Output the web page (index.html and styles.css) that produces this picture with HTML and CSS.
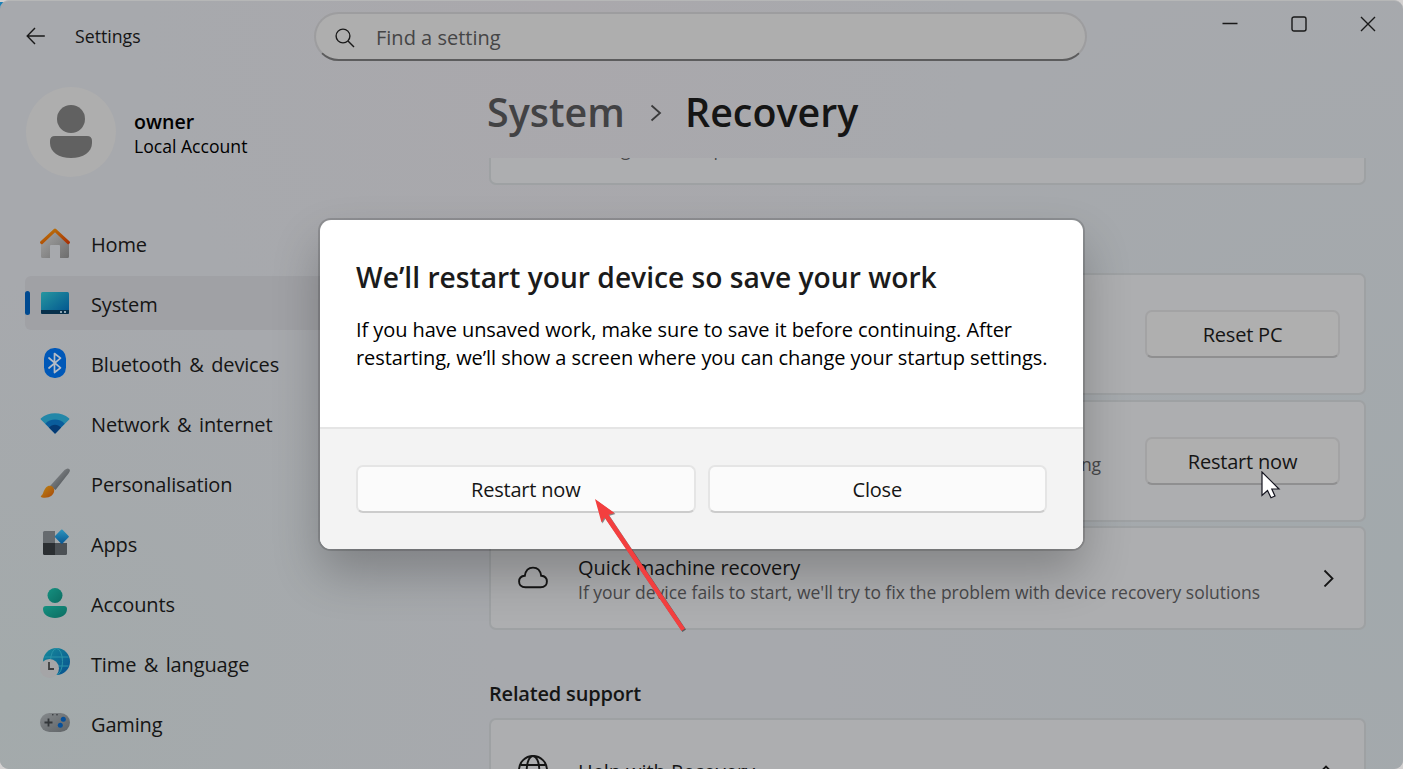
FILE: index.html
```html
<!DOCTYPE html>
<html lang="en">
<head>
<meta charset="UTF-8" />
<meta name="viewport" content="width=device-width, initial-scale=1" />
<title>Settings - Recovery</title>
<link rel="stylesheet" href="styles.css">
</head>
<body>
<div class="window">
  <header class="titlebar">
    <svg class="back" width="20" height="18" viewBox="0 0 20 18"><path d="M18.800 9H1.200M9 1L1.200 9L9 17" /></svg>
    <span class="app-name">Settings</span>
    <div class="search">
      <svg width="20" height="20" viewBox="0 0 20 20"><circle cx="8" cy="8" r="6.900" /><path d="M13 13L19 19" /></svg>
      <span class="search-text">Find a setting</span>
    </div>
    <div class="controls">
      <svg width="16" height="16" viewBox="0 0 16 16"><path d="M.5 7.500H15.500" /></svg>
      <svg width="16" height="16" viewBox="0 0 16 16"><rect x="1" y="1" width="14" height="14" rx="2" /></svg>
      <svg width="16" height="16" viewBox="0 0 16 16"><path d="M1 1L15 15M15 1L1 15" /></svg>
    </div>
  </header>

  <div class="content">
    <aside class="sidebar">
      <div class="profile">
        <div class="avatar">
          <svg width="42" height="54" viewBox="0 0 42 54"><circle cx="21" cy="14" r="14" /><path d="M5 31H37Q42 31 42 36V38C42 47 33 53 21 53S0 47 0 38V36Q0 31 5 31Z" /></svg>
        </div>
        <div class="who">
          <div class="user-name">owner</div>
          <div class="user-type">Local Account</div>
        </div>
      </div>

      <nav class="nav">
        <a class="nav-item">
          <svg width="30" height="30" viewBox="0 0 30 30">
            <defs>
              <linearGradient id="wall" x1="0" y1="0" x2="1" y2="1"><stop offset="0" stop-color="#a8a8a8" /><stop offset="1" stop-color="#6d6d6d" /></linearGradient>
              <linearGradient id="roof" x1="0" y1="0" x2="1" y2="1"><stop offset="0" stop-color="#bd7a08" /><stop offset="1" stop-color="#a83205" /></linearGradient>
            </defs>
            <path fill="url(#wall)" d="M1 14L15 2L29 14V28.500Q29 30 27.500 30H20V18Q20 17 19 17H11Q10 17 10 18V30H2.500Q1 30 1 28.500Z" />
            <path fill="none" stroke="url(#roof)" stroke-width="3.200" stroke-linecap="round" stroke-linejoin="round" d="M1.700 14.500L15 2.200L28.300 14.500" />
          </svg>
          <span class="nav-label">Home</span>
        </a>
        <a class="nav-item selected">
          <svg width="30" height="30" viewBox="0 0 30 30">
            <defs><linearGradient id="screen" x1="0" y1="0" x2="1" y2="1"><stop offset="0" stop-color="#2697a0" /><stop offset="1" stop-color="#00528f" /></linearGradient></defs>
            <rect x="1" y="4" width="28" height="22" rx="1.500" fill="url(#screen)" />
            <path fill="#07304b" d="M1 22H29V24.500Q29 26 27.500 26H2.500Q1 26 1 24.500Z" />
            <path fill="#8ea5b3" d="M20 23H22V25H20ZM24 23H26V25H24Z" />
          </svg>
          <span class="nav-label">System</span>
        </a>
        <a class="nav-item">
          <svg width="30" height="30" viewBox="0 0 30 30">
            <rect x="4" y="0" width="22" height="30" rx="10.500" fill="#0058b8" />
            <path fill="none" stroke="#b5bcc6" stroke-width="1.700" stroke-linejoin="round" stroke-linecap="round" d="M9 10L20.500 19.800L14.500 24.500V5.500L20.500 10.200L9 20" />
          </svg>
          <span class="nav-label">Bluetooth &amp; devices</span>
        </a>
        <a class="nav-item">
          <svg width="30" height="30" viewBox="0 0 30 30">
            <path fill="#2387a8" d="M15 25.500L.8 11.500Q.3 10.800 1 10.200C8.500 3.500 21.500 3.500 29 10.200Q29.700 10.800 29.200 11.500Z" />
            <path fill="#0a5d9c" d="M15 25.500L5.300 15.700C10.500 10.200 19.500 10.200 24.700 15.700Z" />
            <path fill="#043a74" d="M15 25.800L8.900 19.600C12.300 15.700 17.700 15.700 21.100 19.600L16 25Q15 26 14 25Z" />
          </svg>
          <span class="nav-label">Network &amp; internet</span>
        </a>
        <a class="nav-item">
          <svg width="30" height="30" viewBox="0 0 30 30">
            <defs>
              <linearGradient id="handle" x1="0" y1="0" x2="1" y2="1"><stop offset="0.200" stop-color="#85888b" /><stop offset="1" stop-color="#3d4246" /></linearGradient>
              <linearGradient id="bristle" x1="0" y1="0" x2="1" y2="1"><stop offset="0" stop-color="#bd8614" /><stop offset="1" stop-color="#a6480b" /></linearGradient>
            </defs>
            <path fill="url(#handle)" d="M10 18L24.500 2Q27.500 -.6 29.200 1T28.500 5.500L15.500 22Z" />
            <path fill="url(#bristle)" d="M6 19.500C8.500 16.500 13 17.500 14 21C15.300 26.500 9.500 31 2 29.500Q.3 29 1 28C3.500 26.500 3.200 22.500 6 19.500Z" />
          </svg>
          <span class="nav-label">Personalisation</span>
        </a>
        <a class="nav-item">
          <svg width="30" height="30" viewBox="0 0 30 30">
            <defs><linearGradient id="tile" x1="0" y1="0" x2="1" y2="1"><stop offset="0" stop-color="#2e96be" /><stop offset="1" stop-color="#075692" /></linearGradient></defs>
            <path fill="#666b6f" d="M4.500 3H15V15H3V4.500Q3 3 4.500 3Z" />
            <path fill="#2b2f32" d="M3 15H15V27H4.500Q3 27 3 25.500Z" />
            <path fill="#4c5155" d="M15 15H27V25.500Q27 27 25.500 27H15Z" />
            <rect x="16.500" y="3.300" width="10.600" height="10.600" rx="1" transform="rotate(45 21.800 8.600)" fill="url(#tile)" />
          </svg>
          <span class="nav-label">Apps</span>
        </a>
        <a class="nav-item">
          <svg width="30" height="30" viewBox="0 0 30 30">
            <defs><linearGradient id="person" x1="0" y1="0" x2="1" y2="1"><stop offset="0" stop-color="#159181" /><stop offset="1" stop-color="#0c6c61" /></linearGradient></defs>
            <circle cx="15" cy="7.500" r="7.500" fill="url(#person)" />
            <path fill="url(#person)" d="M6 18H24Q27 18 27 21C27 26.500 22 30 15 30S3 26.500 3 21Q3 18 6 18Z" />
          </svg>
          <span class="nav-label">Accounts</span>
        </a>
        <a class="nav-item">
          <svg width="30" height="30" viewBox="0 0 30 30">
            <defs><linearGradient id="globe" x1="0" y1="0" x2="1" y2="1"><stop offset="0" stop-color="#178b9b" /><stop offset="1" stop-color="#064f8e" /></linearGradient></defs>
            <circle cx="16.500" cy="13.500" r="13.500" fill="url(#globe)" />
            <g fill="none" stroke="#2b93a8" stroke-width="1"><ellipse cx="16.500" cy="13.500" rx="6" ry="13" /><path d="M4.500 9H28.500M4.500 18H28.500" /></g>
            <circle cx="9.500" cy="20.500" r="9.500" fill="#a5a5a7" />
            <path fill="none" stroke="#3d3d3f" stroke-width="1.800" d="M9 14V21H14" />
          </svg>
          <span class="nav-label">Time &amp; language</span>
        </a>
        <a class="nav-item">
          <svg width="30" height="30" viewBox="0 0 30 30">
            <defs><linearGradient id="pad" x1="0" y1="0" x2="1" y2="1"><stop offset="0" stop-color="#85898c" /><stop offset="1" stop-color="#5f6366" /></linearGradient></defs>
            <rect x="0" y="5" width="30" height="19" rx="9.500" fill="url(#pad)" />
            <path fill="none" stroke="#33373a" stroke-width="1.800" d="M4.500 14.500H12.500M8.500 10.500V18.500" />
            <circle cx="23.300" cy="11.300" r="2.500" fill="#07509a" /><circle cx="20.300" cy="17.300" r="2.500" fill="#07509a" />
            <circle cx="12.800" cy="6.800" r=".8" fill="#33373a" /><circle cx="17" cy="6.800" r=".8" fill="#33373a" />
          </svg>
          <span class="nav-label">Gaming</span>
        </a>
      </nav>
    </aside>

    <main class="main">
      <h1 class="crumbs">
        <span class="crumb-parent">System</span>
        <svg width="12" height="18" viewBox="0 0 12 18"><path d="M1.500 1.500L10 9L1.500 16.500" /></svg>
        <span class="crumb-current">Recovery</span>
      </h1>
      <div class="scroll">
        <section class="card card-top">
          <span class="card-desc">Change the setup details, then</span>
        </section>
        <section class="card card-tall card-reset">
          <button class="btn">Reset PC</button>
        </section>
        <section class="card card-tall">
          <div class="card-text">
            <div class="card-desc">Restart your device to change startup settings, including starting</div>
          </div>
          <button class="btn">Restart now</button>
        </section>
        <section class="card card-quick">
          <svg class="card-icon" width="30" height="30" viewBox="0 0 30 30"><path d="M7.500 24.300Q1.100 24.300 1.100 18.600Q1.100 13.200 6.800 12.800Q8 4.600 15 4.600T23.200 12.800Q28.900 13.200 28.900 18.600Q28.900 24.300 22.500 24.300Z" /></svg>
          <div class="card-text">
            <div class="card-title">Quick machine recovery</div>
            <div class="card-desc">If your device fails to start, we'll try to fix the problem with device recovery solutions</div>
          </div>
          <svg class="chevron" width="12" height="18" viewBox="0 0 12 18"><path d="M1.500 1.500L9.500 9.500L1.500 17.500" /></svg>
        </section>
        <h2 class="group-title">Related support</h2>
        <section class="card card-help">
          <svg class="card-icon" width="30" height="30" viewBox="0 0 30 30"><circle cx="15" cy="15" r="14" /><ellipse cx="15" cy="15" rx="6.300" ry="14" /><path d="M2.500 10H27.500M2.500 20H27.500" /></svg>
          <div class="card-text">
            <div class="card-title">Help with Recovery</div>
          </div>
          <svg class="chevron up" width="18" height="12" viewBox="0 0 18 12"><path d="M1 10.500L9 2.500L17 10.500" /></svg>
        </section>
      </div>
    </main>
  </div>
</div>

<div class="dialog">
  <div class="dialog-body">
    <h3 class="dialog-title">We’ll restart your device so save your work</h3>
    <p class="dialog-text">If you have unsaved work, make sure to save it before continuing. After<br>restarting, we’ll show a screen where you can change your startup settings.</p>
  </div>
  <div class="dialog-footer">
    <button class="btn">Restart now</button>
    <button class="btn">Close</button>
  </div>
</div>

<svg class="pointer-arrow" width="94" height="136" viewBox="0 0 94 136"><path d="M3 3L22.500 17L16.500 18.800L93 132.500L89.500 135L12.500 21.500L9.500 26.500Z" /></svg>
<svg class="cursor" width="20" height="29" viewBox="0 0 20 29"><path d="M1 1V24.500L6.500 19.500L10 26.800L14 25L10.800 18H18Z" /></svg>
</body>
</html>
```
FILE: styles.css
```css
* { box-sizing: border-box; }
body {
  margin: 0;
  width: 1403px; height: 769px;
  background: linear-gradient(#1b7fb5, #1b7fb5) 0 2px / 10px 10px no-repeat, #d3d1d1;
  font-family: 'Open Sans', 'Noto Sans', sans-serif;
  font-size: 20px;
  color: #151515;
  position: relative;
  overflow: hidden;
}
h1, h2, h3, p { margin: 0; font-weight: 400; }
svg { flex: none; display: block; }

.window {
  height: 769px;
  border-top: 1px solid #b6b7b7;
  border-radius: 9px;
  overflow: hidden;
  background:
    radial-gradient(ellipse 420px 420px at 560px 20px, #aaa8ac 0%, rgba(170,168,172,0) 100%),
    radial-gradient(ellipse 500px 420px at 0 700px, #a3aaab 0%, rgba(163,170,171,0) 100%),
    radial-gradient(ellipse 600px 620px at 1403px 560px, #a2a9ac 0%, rgba(162,169,172,0) 100%),
    #a7a9ad;
}

/* Title bar */
.titlebar { display: flex; height: 77px; padding-left: 26px; }
.back { margin-top: 26px; }
.back path, .search svg, .controls svg { fill: none; stroke: #191919; stroke-width: 1.4; }
.app-name { margin: 22px 0 0 29px; width: 239px; font-size: 17.7px; line-height: 26px; }
.search {
  display: flex; align-items: center;
  width: 773px; height: 49px;
  margin-top: 11px;
  padding: 2px 0 0 19px;
  gap: 21px;
  border: 2px solid #9d9d9f;
  border-bottom-color: #5c5c5d;
  border-radius: 25px;
  background: #aeaeae;
}
.search-text { color: #454546; }
.controls { display: flex; gap: 53px; margin: 15px 0 0 135px; }

.content { display: flex; }

/* Sidebar */
.sidebar { width: 489px; padding: 9px 25px 0; }
.profile { display: flex; gap: 18px; padding-left: 1px; height: 129px; }
.avatar {
  display: flex; justify-content: center;
  width: 90px; height: 90px;
  padding-top: 18px;
  border-radius: 50%;
  background: #aeaeae;
}
.avatar svg { fill: #616161; }
.who { padding-top: 22px; line-height: 25px; color: #000; }
.user-name { font-size: 19.6px; font-weight: 600; }
.user-type { font-size: 17.6px; }
.nav { display: flex; flex-direction: column; gap: 6px; }
.nav-item {
  display: flex; align-items: center;
  position: relative;
  height: 54px;
  padding-left: 15px;
  gap: 21px;
  border-radius: 6px;
}
.selected { background: #a0a1a5; }
.selected::before {
  content: '';
  position: absolute;
  left: 0; top: 15px;
  width: 5px; height: 24px;
  border-radius: 3px;
  background: #004a90;
}
.nav-label { padding-top: 2px; letter-spacing: -0.15px; word-spacing: 2.5px; }

/* Main column */
.main { width: 877px; }
.crumbs { display: flex; align-items: center; height: 80px; padding-bottom: 13px; font-size: 39.4px; font-weight: 600; }
.crumbs svg, .chevron { fill: none; stroke: #3a3a3b; stroke-width: 1.8; }
.crumbs svg { margin-top: 2px; }
.crumb-parent { width: 163px; margin-left: -2px; color: #424244; }
.crumb-current { margin-left: 23px; }
.scroll { height: 611px; overflow: hidden; }
.card {
  display: flex; align-items: center;
  padding: 0 24px 0 27px;
  border: 2px solid #9ea1a3;
  border-radius: 7px;
  background: #adaeb0;
}
.card-top { height: 60px; margin-top: -33px; padding: 0 0 13px 87px; letter-spacing: 0.2px; }
.card-tall { height: 122px; margin-bottom: 5px; padding-left: 87px; }
.card-reset { margin-top: 88px; }
.card-quick { height: 104px; margin-top: -1px; }
.card-help { height: 104px; }
.card-icon { margin-right: 30px; fill: none; stroke: #151515; stroke-width: 1.9; }
.card-text { flex: 1; padding-top: 3px; line-height: 25px; }
.card-tall .card-text { padding-top: 6px; white-space: nowrap; }
.card-title { letter-spacing: -0.07px; }
.card-desc { font-size: 17.5px; color: #48484a; }
.card-tall .btn { margin-left: auto; }
.chevron { stroke: #151515; margin-right: 5px; }
.group-title { margin: 50px 0 10px; font-size: 20px; font-weight: 600; line-height: 28px; letter-spacing: -0.18px; }

.btn {
  display: flex; align-items: center; justify-content: center;
  width: 195px; height: 48px;
  padding: 0;
  border: 2px solid #a3a3a4;
  border-bottom-color: #8f8f90;
  border-radius: 7px;
  background: #afafaf;
  font: inherit;
  letter-spacing: -0.2px;
  color: #151515;
}

/* Dialog over the page */
.dialog {
  position: absolute;
  left: 320px; top: 220px;
  width: 763px; height: 329px;
  border-radius: 11px;
  background: #fff;
  box-shadow: 0 0 0 2px rgba(0,0,0,0.15), 0 24px 48px rgba(0,0,0,0.24);
  overflow: hidden;
}
.dialog-body { height: 207px; padding: 37px 36px 0; }
.dialog-title { font-size: 28.2px; font-weight: 600; line-height: 40px; color: #1b1b1b; white-space: nowrap; }
.dialog-text { margin-top: 19px; line-height: 28px; letter-spacing: -0.07px; color: #000; white-space: nowrap; }
.dialog-footer {
  display: flex; gap: 12px;
  height: 122px;
  padding: 36px 36px 0;
  border-top: 2px solid #e5e5e5;
  background: #f3f3f3;
}
.dialog-footer .btn { flex: 1; border-color: #e5e5e5; border-bottom-color: #cccccc; background: #fbfbfb; }

.pointer-arrow { position: absolute; left: 592px; top: 496px; fill: #f33f3f; filter: drop-shadow(1px 1px 0.5px rgba(0,0,0,0.45)); }
.cursor { position: absolute; left: 1261px; top: 471px; fill: #fff; stroke: #14141f; stroke-width: 1.2; }
```
